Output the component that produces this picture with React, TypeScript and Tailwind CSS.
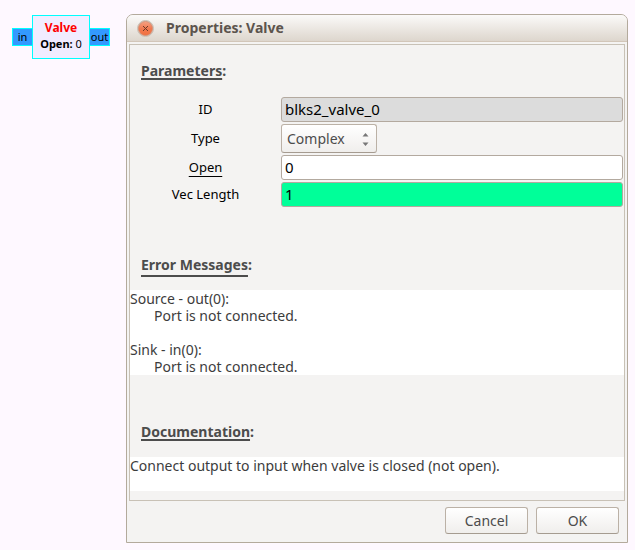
import { useState, type ReactNode } from "react";

type SectionTitleProps = { children: string; deep?: boolean };

function SectionTitle({ children, deep }: SectionTitleProps) {
  return (
    <h2 className="pl-[11px] text-[14px] leading-5 font-bold text-[#4c4c4c]">
      <span
        className={
          deep
            ? "underline decoration-2 underline-offset-[5px] [text-decoration-skip-ink:none]"
            : "underline decoration-2 underline-offset-2 [text-decoration-skip-ink:none]"
        }
      >
        {children}
      </span>
      :
    </h2>
  );
}

type FieldLabelProps = { htmlFor: string; children: ReactNode };

function FieldLabel({ htmlFor, children }: FieldLabelProps) {
  return (
    <label htmlFor={htmlFor} className="pb-0.5 text-center text-[13px] leading-4 text-black">
      {children}
    </label>
  );
}

const fieldBox =
  "h-[25px] w-full min-w-0 rounded-[3px] border border-[#b3a99f] px-[3px] pb-0.5 text-[15px] leading-5 text-black outline-none";

const dialogButton =
  "h-[27px] w-[83px] rounded-[3px] border border-[#bbb1a6] border-b-[#a59b90] bg-linear-to-b from-white to-[#f0eeec] text-[14px] leading-5 text-[#4c4c4c]";

function Block() {
  return (
    <div className="mt-[15px] ml-3 flex h-11 w-[98px] items-center text-[11px] leading-4 text-black">
      <div className="-mr-px h-[18px] w-[21px] shrink-0 border border-[#00ffff] bg-[#3399ff] text-center">in</div>
      <div className="relative flex h-11 w-[58px] shrink-0 flex-col items-center justify-center border border-[#00ffff] bg-[#f1ecff] pb-0.5 whitespace-nowrap">
        <div className="text-[12px] font-bold text-[#ff0000]">Valve</div>
        <div>
          <b>Open:</b> 0
        </div>
      </div>
      <div className="-ml-px h-[18px] w-[21px] shrink-0 border border-[#00ffff] bg-[#3399ff] text-center">out</div>
    </div>
  );
}

export default function App() {
  const [type, setType] = useState("Complex");
  const [open, setOpen] = useState("0");
  const [vec, setVec] = useState("1");

  return (
    <main className="flex min-h-screen items-start bg-[#fef8ff] pr-[7px] font-['Noto_Sans',sans-serif]">
      <div className="w-[126px] shrink-0">
        <Block />
      </div>

      <section
        aria-label="Properties: Valve"
        className="mt-[14px] min-w-0 flex-1 rounded-t-[7px] border border-[#b3aa9c] bg-[#f4f3f2]"
      >
        <header className="flex h-[27px] items-center rounded-t-[6px] border-b border-[#d2c6b9] bg-linear-to-b from-[#fbfaf9] to-[#ddd6cd] pl-[10px]">
          <button type="button" aria-label="Close" className="size-[17px]">
            <svg viewBox="0 0 17 17" className="size-[17px]">
              <defs>
                <linearGradient id="closeFill" x1="0" y1="0" x2="0" y2="1">
                  <stop offset="0" stopColor="#f6a283" />
                  <stop offset="0.5" stopColor="#f07a52" />
                  <stop offset="1" stopColor="#f2703f" />
                </linearGradient>
              </defs>
              <circle cx="8.5" cy="8.5" r="8" fill="#dcd4cb" stroke="#c9bfb4" strokeWidth="1" />
              <circle cx="8.5" cy="8.5" r="7" fill="url(#closeFill)" stroke="#d08a70" strokeWidth="0.8" />
              <path d="M6 6l5 5M11 6l-5 5" stroke="#6b3a28" strokeWidth="1" />
            </svg>
          </button>
          <h1 className="ml-3 text-[14px] leading-5 font-bold text-[#5c544d]">Properties: Valve</h1>
        </header>

        <div className="mx-0.5 mt-0.5 border border-[#c8c1b6] pb-[9px]">
          <div className="pt-4">
            <SectionTitle>Parameters</SectionTitle>
          </div>

          <form
            className="mt-4 grid grid-cols-[151px_minmax(0,1fr)] items-center gap-y-0.5 pr-px"
            onSubmit={(e) => e.preventDefault()}
          >
            <FieldLabel htmlFor="id">ID</FieldLabel>
            <input id="id" readOnly value="blks2_valve_0" className={`${fieldBox} bg-[#dcdcdc]`} />

            <FieldLabel htmlFor="type">Type</FieldLabel>
            <div className="relative h-[29px] w-24">
              <select
                id="type"
                value={type}
                onChange={(e) => setType(e.target.value)}
                className="size-full appearance-none rounded-[3px] border border-[#bbb1a6] border-b-[#a59b90] bg-linear-to-b from-white to-[#f0eeec] pl-[5px] text-[14px] leading-5 text-[#4c4c4c] outline-none"
              >
                <option>Complex</option>
                <option>Float</option>
                <option>Int</option>
                <option>Short</option>
                <option>Byte</option>
              </select>
              <svg viewBox="0 0 7 13" className="pointer-events-none absolute top-[9px] right-2 h-[13px] w-[7px]">
                <path d="M0.5 3.5L3.5 0L6.5 3.5zM0.5 9.5L3.5 13L6.5 9.5z" fill="#777" />
              </svg>
            </div>

            <FieldLabel htmlFor="open">
              <span className="underline decoration-1 underline-offset-4 [text-decoration-skip-ink:none]">Open</span>
            </FieldLabel>
            <input id="open" value={open} onChange={(e) => setOpen(e.target.value)} className={`${fieldBox} bg-white`} />

            <FieldLabel htmlFor="vec">Vec Length</FieldLabel>
            <input id="vec" value={vec} onChange={(e) => setVec(e.target.value)} className={`${fieldBox} bg-[#00ff99]`} />
          </form>

          <div className="mt-12">
            <SectionTitle deep>Error Messages</SectionTitle>
          </div>
          <div className="mt-[15px] bg-white text-[14px] leading-[17px] text-[#3c3c3c]">
            <p>Source - out(0):</p>
            <p className="pl-6">Port is not connected.</p>
            <p className="mt-[17px]">Sink - in(0):</p>
            <p className="pl-6">Port is not connected.</p>
          </div>

          <div className="mt-[47px]">
            <SectionTitle>Documentation</SectionTitle>
          </div>
          <p className="mt-[15px] min-h-[34px] bg-white text-[14px] leading-[17px] text-[#3c3c3c]">
            Connect output to input when valve is closed (not open).
          </p>
        </div>

        <footer className="flex justify-end gap-2 pt-1.5 pr-2 pb-2">
          <button type="button" className={dialogButton}>
            Cancel
          </button>
          <button type="button" className={dialogButton}>
            OK
          </button>
        </footer>
      </section>
    </main>
  );
}
